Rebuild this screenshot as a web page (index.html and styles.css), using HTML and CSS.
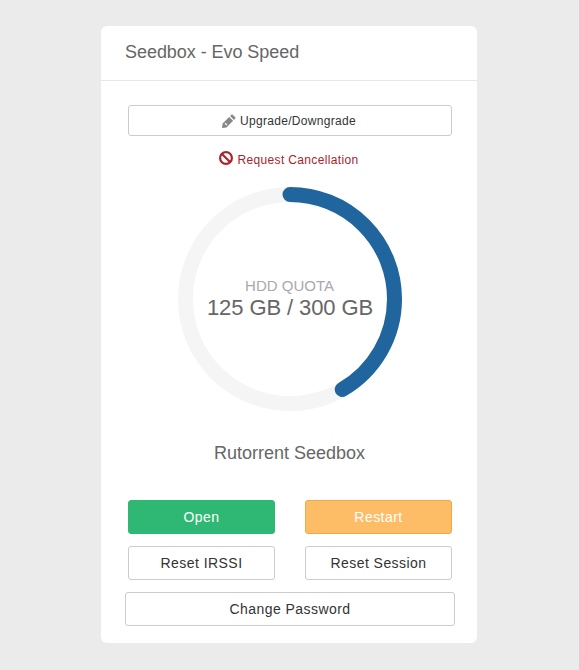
FILE: index.html
```html
<!DOCTYPE html>
<html lang="en">
<head>
    <meta charset="UTF-8">
    <meta name="viewport" content="width=device-width, initial-scale=1.0">
    <title>Seedbox - Evo Speed</title>
    <link rel="stylesheet" href="styles.css">
</head>
<body>
    <div class="card">
        <div class="card-head">Seedbox - Evo Speed</div>
        <div class="card-body">
            <a class="btn btn-upgrade" href="#">
                <svg class="icon-pencil" viewBox="0 0 14 14" width="14" height="14"><path d="M10.9.9l2.2 2.2c.5.5.5 1.2 0 1.7L12 5.9 8.1 2 9.2.9c.5-.5 1.2-.5 1.7 0zM7.2 2.9l3.9 3.9-6.6 6.6-3.9.6-.6-.6.6-3.9zM2.6 9.6l1.8 1.8.9-.9-1.8-1.8z"/></svg>
                Upgrade/Downgrade
            </a>
            <a class="cancel-link" href="#">
                <svg class="icon-ban" viewBox="0 0 14 14" width="14" height="14"><circle cx="7" cy="7" r="5.9"/><path d="M3 3l8 8"/></svg>
                Request Cancellation
            </a>
            <div class="quota">
                <svg class="quota-ring" viewBox="0 0 224 224" width="224" height="224">
                    <circle class="ring-track" cx="112" cy="112" r="104.5"/>
                    <circle class="ring-value" cx="112" cy="112" r="104.5" pathLength="300" stroke-dasharray="125 300" transform="rotate(-90 112 112)"/>
                </svg>
                <div class="quota-text">
                    <div class="quota-label">HDD QUOTA</div>
                    <div class="quota-value">125 GB / 300 GB</div>
                </div>
            </div>
            <h2 class="service-name">Rutorrent Seedbox</h2>
            <div class="btn-grid">
                <a class="btn btn-open" href="#">Open</a>
                <a class="btn btn-restart" href="#">Restart</a>
                <a class="btn" href="#">Reset IRSSI</a>
                <a class="btn" href="#">Reset Session</a>
            </div>
            <a class="btn btn-wide" href="#">Change Password</a>
        </div>
    </div>
</body>
</html>
```

FILE: styles.css
```css
body {
    font-family: "Liberation Sans", Arial, sans-serif;
    margin: 0;
    padding: 0;
    background-color: #ebebeb;
    color: #666;
}
a {
    text-decoration: none;
}
.card {
    width: 376px;
    margin: 26px 0 27px 101px;
    background: #fff;
    border-radius: 6px;
}
.card-head {
    height: 54px;
    line-height: 52px;
    padding: 0 24px;
    font-size: 18px;
    letter-spacing: -0.05px;
    color: #666;
    border-bottom: 1px solid #e8e8e8;
}
.card-body {
    padding: 24px 22px 17px 24px;
}
.btn {
    display: flex;
    align-items: center;
    justify-content: center;
    box-sizing: border-box;
    height: 34px;
    font-size: 14px;
    letter-spacing: 0.45px;
    color: #333;
    background: #fff;
    border: 1px solid #ccc;
    border-radius: 3px;
}
.btn-upgrade {
    height: 31px;
    margin: 0 3px;
    padding-right: 2px;
    font-size: 12px;
    letter-spacing: 0.32px;
    gap: 4px;
}
.icon-pencil {
    fill: #888;
}
.cancel-link {
    display: flex;
    align-items: flex-start;
    justify-content: center;
    gap: 4px;
    margin-top: 15px;
    padding-right: 2px;
    height: 16px;
    font-size: 12px;
    line-height: 18px;
    letter-spacing: 0.35px;
    color: #a9232b;
}
.icon-ban {
    fill: none;
    stroke: #a9232b;
    stroke-width: 2.2;
}
.quota {
    position: relative;
    width: 224px;
    height: 224px;
    margin: 20px auto 0;
}
.quota-ring {
    display: block;
    fill: none;
    stroke-width: 15;
}
.ring-track {
    stroke: #f5f5f5;
}
.ring-value {
    stroke: #20659d;
    stroke-linecap: round;
}
.quota-text {
    position: absolute;
    left: 0;
    right: 0;
    top: 90px;
    text-align: center;
}
.quota-label {
    font-size: 15px;
    line-height: 18px;
    padding-right: 1px;
    color: #a9a9ae;
}
.quota-value {
    font-size: 22px;
    line-height: 26px;
    letter-spacing: -0.1px;
    color: #666;
}
.service-name {
    margin: 31px 0 0;
    padding-right: 1px;
    font-size: 18px;
    font-weight: normal;
    line-height: 22px;
    text-align: center;
    color: #666;
}
.btn-grid {
    display: grid;
    grid-template-columns: 147px 147px;
    justify-content: space-between;
    gap: 12px 30px;
    margin: 36px 3px 0;
}
.btn-open {
    background: #2fb874;
    border-color: #2fb874;
    color: #fff;
}
.btn-restart {
    background: #fdbd66;
    border-color: #f0a947;
    color: #fff;
}
.btn-wide {
    width: 330px;
    margin-top: 12px;
}
```
